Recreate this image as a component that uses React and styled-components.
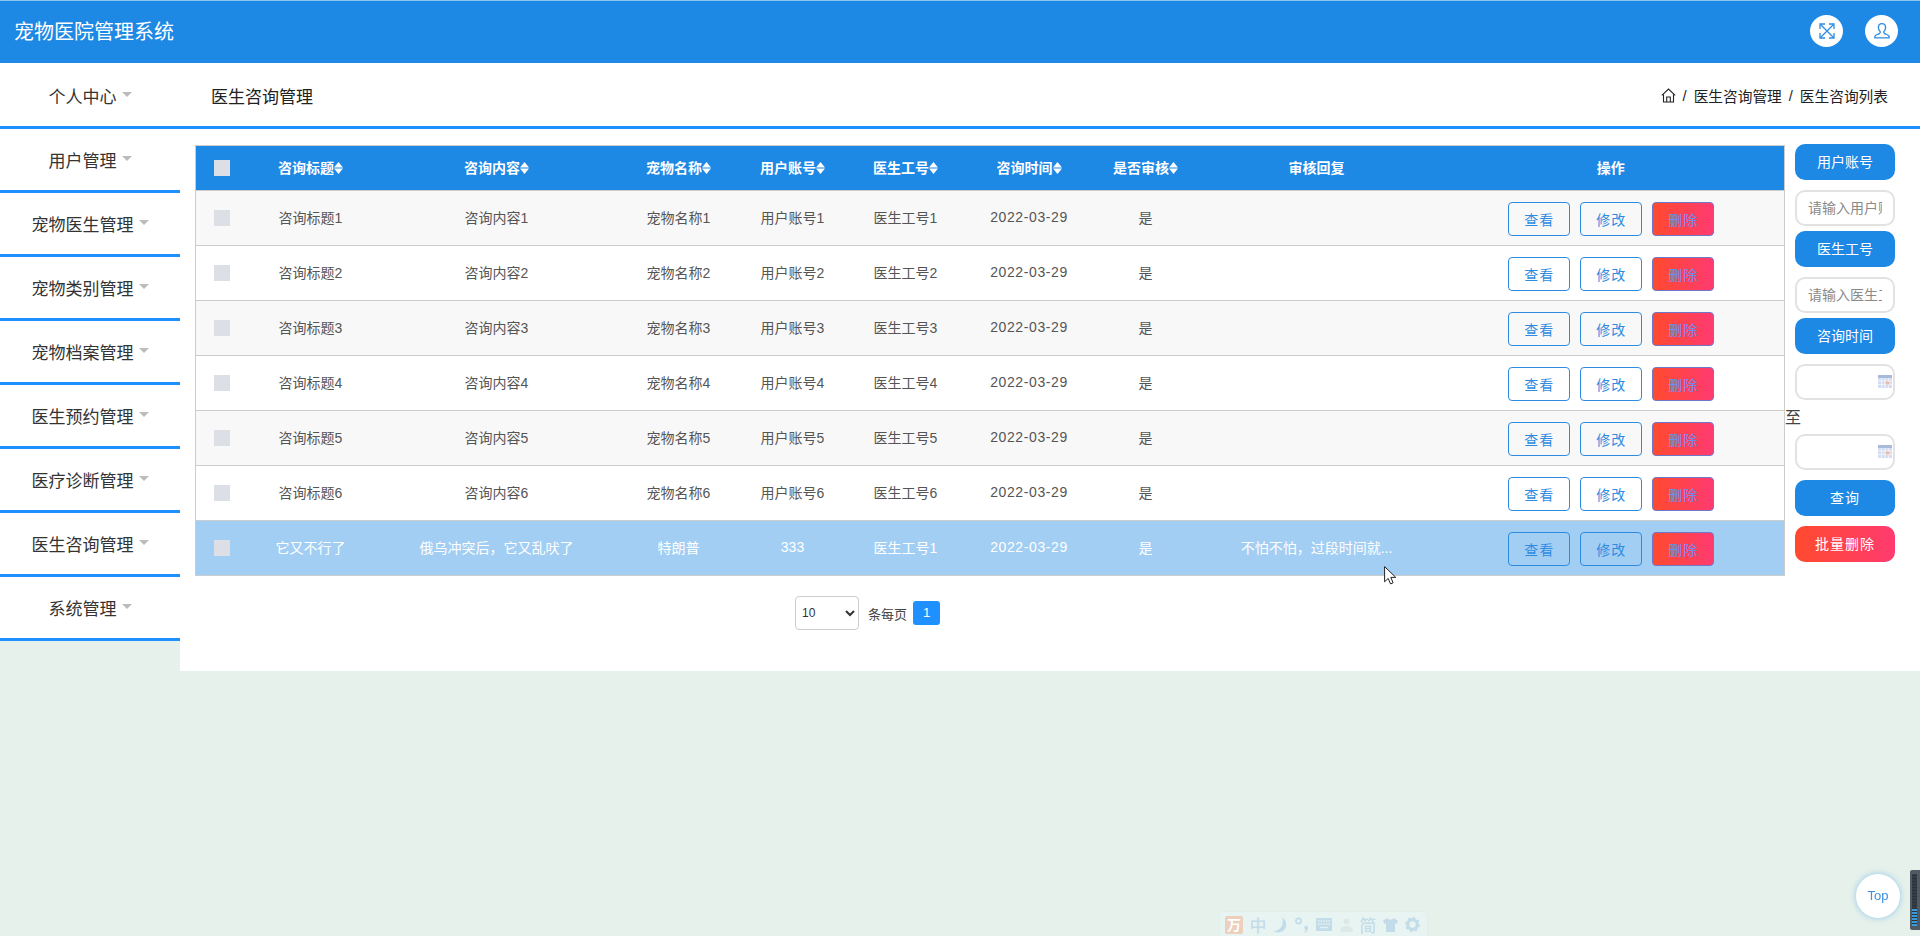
import React from 'react';
import styled, { createGlobalStyle } from 'styled-components';

const menuItems = [
  '个人中心',
  '用户管理',
  '宠物医生管理',
  '宠物类别管理',
  '宠物档案管理',
  '医生预约管理',
  '医疗诊断管理',
  '医生咨询管理',
  '系统管理',
];

const columns = [
  { title: '咨询标题', sort: true },
  { title: '咨询内容', sort: true },
  { title: '宠物名称', sort: true },
  { title: '用户账号', sort: true },
  { title: '医生工号', sort: true },
  { title: '咨询时间', sort: true },
  { title: '是否审核', sort: true },
  { title: '审核回复' },
  { title: '操作' },
];

const columnWidths = [53, 124, 248, 116, 112, 114, 133, 100, 242, 347];
const TIME_COLUMN = 5;

const rows = [1, 2, 3, 4, 5, 6].map(n => [
  `咨询标题${n}`,
  `咨询内容${n}`,
  `宠物名称${n}`,
  `用户账号${n}`,
  `医生工号${n}`,
  '2022-03-29',
  '是',
  '',
]);
rows.push([
  '它又不行了',
  '俄乌冲突后，它又乱吠了',
  '特朗普',
  '333',
  '医生工号1',
  '2022-03-29',
  '是',
  '不怕不怕，过段时间就...',
]);

function App() {
  return (
    <>
      <GlobalStyle />
      <TopBar>
        <AppTitle>宠物医院管理系统</AppTitle>
        <TopActions>
          <RoundIcon>
            <ExpandIcon />
          </RoundIcon>
          <RoundIcon>
            <UserIcon />
          </RoundIcon>
        </TopActions>
      </TopBar>
      <Layout>
        <Sidebar>
          {menuItems.map(item => (
            <MenuItem key={item}>
              {item}
              <Caret />
            </MenuItem>
          ))}
        </Sidebar>
        <Main>
          <PageHeader>
            <PageTitle>医生咨询管理</PageTitle>
            <Breadcrumb>
              <HomeIcon />
              <Slash>/</Slash>
              <span>医生咨询管理</span>
              <Slash>/</Slash>
              <span>医生咨询列表</span>
            </Breadcrumb>
          </PageHeader>
          <Content>
            <TableArea>
              <Table>
                <colgroup>
                  {columnWidths.map((width, i) => (
                    <col key={i} width={width} />
                  ))}
                </colgroup>
                <thead>
                  <tr>
                    <HeadCell>
                      <CheckBox />
                    </HeadCell>
                    {columns.map(col => (
                      <HeadCell key={col.title}>
                        {col.title}
                        {col.sort && <SortIcon />}
                      </HeadCell>
                    ))}
                  </tr>
                </thead>
                <tbody>
                  {rows.map((row, i) => (
                    <Row key={i} $striped={i % 2 === 0} $active={i === rows.length - 1}>
                      <Cell>
                        <CheckBox />
                      </Cell>
                      {row.map((value, j) => (
                        <Cell key={j} $wide={j === TIME_COLUMN}>{value}</Cell>
                      ))}
                      <ActionCell>
                        <RowActions>
                          <OutlineButton>查看</OutlineButton>
                          <OutlineButton>修改</OutlineButton>
                          <DeleteButton>删除</DeleteButton>
                        </RowActions>
                      </ActionCell>
                    </Row>
                  ))}
                </tbody>
              </Table>
              <Pagination>
                <PageSize defaultValue="10">
                  <option value="10">10</option>
                  <option value="20">20</option>
                  <option value="50">50</option>
                </PageSize>
                <PageSizeLabel>条每页</PageSizeLabel>
                <PageNumber>1</PageNumber>
              </Pagination>
            </TableArea>
            <SearchPanel>
              <FieldLabel>用户账号</FieldLabel>
              <TextField placeholder="请输入用户账号" $gap={5} />
              <FieldLabel>医生工号</FieldLabel>
              <TextField placeholder="请输入医生工号" $gap={5} />
              <FieldLabel>咨询时间</FieldLabel>
              <DateField />
              <ToLabel>至</ToLabel>
              <DateField $last />
              <SearchButton>查询</SearchButton>
              <BatchDeleteButton>批量删除</BatchDeleteButton>
            </SearchPanel>
          </Content>
        </Main>
      </Layout>
      <TopButton>Top</TopButton>
      <ScrollWidget />
      <ImeBar>
        <ImeLogo>万</ImeLogo>
        <ImeGlyph>中</ImeGlyph>
        <ImeSlot>
          <svg width="14" height="16" viewBox="0 0 14 16">
            <path d="M9 0C13 3 14.500 8 12 12 9.500 15.500 4 16.500 0 14 4 14 7.500 12 9 8.500 10 5.500 10 3 9 0z" fill="#c3dcea" />
          </svg>
        </ImeSlot>
        <ImeSlot>
          <svg width="14" height="16" viewBox="0 0 14 16">
            <circle cx="3.500" cy="4" r="2.600" fill="none" stroke="#c3dcea" strokeWidth="1.800" />
            <path d="M10 9c2.500 -1 3.500 1 3 3s-2 3 -4 4c1 -1.500 1.500 -2.500 1.300 -3.500C9 12 8.800 9.800 10 9z" fill="#c3dcea" />
          </svg>
        </ImeSlot>
        <ImeSlot>
          <svg width="16" height="13" viewBox="0 0 16 13">
            <rect width="16" height="13" rx="1" fill="#c3dcea" />
            <path d="M2 3h12M2 6h12" stroke="#e6f2f1" strokeWidth="1.400" strokeDasharray="1.600 1" />
            <path d="M4 9.500h8" stroke="#e6f2f1" strokeWidth="1.400" />
          </svg>
        </ImeSlot>
        <ImeSlot>
          <svg width="13" height="14" viewBox="0 0 13 14">
            <circle cx="6.500" cy="3.500" r="3" fill="#dde9e8" />
            <path d="M0 14c0-4 3-6 6.500-6s6.500 2 6.500 6z" fill="#dde9e8" />
          </svg>
        </ImeSlot>
        <ImeGlyph>简</ImeGlyph>
        <ImeSlot>
          <svg width="15" height="14" viewBox="0 0 15 14">
            <path d="M4.500 0L0 2.500 1.500 6l1.500-.700V14h9V5.300L13.500 6 15 2.500 10.500 0c-.5 2-5.500 2-6 0z" fill="#c3dcea" />
          </svg>
        </ImeSlot>
        <ImeSlot>
          <svg width="15" height="15" viewBox="0 0 15 15">
            <circle cx="7.500" cy="7.500" r="4.800" fill="none" stroke="#c3dcea" strokeWidth="3.200" />
            <circle cx="7.500" cy="7.500" r="6.700" fill="none" stroke="#c3dcea" strokeWidth="1.600" strokeDasharray="2.500 2.760" />
          </svg>
        </ImeSlot>
      </ImeBar>
      <MouseCursor viewBox="0 0 12 19">
        <path d="M.6.600v15.200l3.600-3.400 2.300 5.500 2.600-1.100-2.300-5.400h5z" fill="#fff" stroke="#222" strokeWidth="1" />
      </MouseCursor>
    </>
  );
}

function ExpandIcon() {
  return (
    <svg width="16" height="16" viewBox="0 0 16 16" fill="none" stroke="#2e8be0" strokeWidth="1.300">
      <path d="M1.500 1.500l13 13M14.500 1.500l-13 13" />
      <path d="M1 6V1h5M10 1h5v5M1 10v5h5M15 10v5h-5" />
    </svg>
  );
}

function UserIcon() {
  return (
    <svg width="18" height="18" viewBox="0 0 20 20" fill="none" stroke="#2e8be0" strokeWidth="1.500">
      <path d="M10 1.800c-2.500 0-4 1.900-4 4.300 0 1.800.8 3.400 1.900 4.400.3.900.1 1.600-.5 2.100-1.300 1-4.100 1.500-5.100 3.100-.3.600-.3 1.300-.2 2h15.800c.1-.7.100-1.400-.2-2-1-1.600-3.800-2.100-5.100-3.100-.6-.5-.8-1.200-.5-2.100 1.100-1 1.900-2.600 1.900-4.400 0-2.400-1.500-4.300-4-4.300z" />
    </svg>
  );
}

function HomeIcon() {
  return (
    <svg width="15" height="15" viewBox="0 0 15 15" fill="none" stroke="#222" strokeWidth="1.100">
      <path d="M.8 7.300L7.500 1l6.700 6.300" />
      <path d="M2.500 6.200V14h10V6.200" />
      <path d="M5.700 14V9h3.600v5" />
    </svg>
  );
}

function SortIcon() {
  return (
    <SortSvg viewBox="0 0 9 12">
      <path d="M4.500 0L9 5.500H0zM0 6.500h9L4.500 12z" fill="#fff" />
    </SortSvg>
  );
}

function DateField({ $last }) {
  return (
    <DateWrap $last={$last}>
      <TextField as="input" readOnly />
      <CalendarIcon viewBox="0 0 14 13">
        <rect width="14" height="13" fill="#d5def0" />
        <rect width="14" height="3" fill="#a9b9d8" />
        <path d="M0 6h14M0 9.500h14M3.500 3v10M7 3v10M10.500 3v10" stroke="#f3f6fb" strokeWidth=".8" />
        <rect x="8" y="6.500" width="3" height="3" fill="#efb9a5" />
      </CalendarIcon>
    </DateWrap>
  );
}

const GlobalStyle = createGlobalStyle`
  body {
    margin: 0;
    background: #e6f1eb;
    font-family: "Liberation Sans", "Noto Sans CJK SC", sans-serif;
  }
`;

const TopBar = styled.header`
  display: flex;
  align-items: center;
  justify-content: space-between;
  box-sizing: border-box;
  height: 63px;
  padding: 0 22px 0 14px;
  background: #1e88e5;
  border-top: 1px solid #8cc4f2;
`;

const AppTitle = styled.div`
  color: #fff;
  font-size: 20px;
  line-height: 28px;
`;

const TopActions = styled.div`
  display: flex;
  gap: 22px;
  margin-top: -2px;
`;

const RoundIcon = styled.div`
  display: flex;
  align-items: center;
  justify-content: center;
  width: 33px;
  height: 32px;
  border-radius: 50%;
  background: #fff;
`;

const Layout = styled.div`
  display: flex;
  align-items: flex-start;
`;

const Sidebar = styled.nav`
  flex: 0 0 180px;
  box-sizing: border-box;
  padding-top: 2px;
  background: #fff;
`;

const MenuItem = styled.div`
  display: flex;
  align-items: center;
  justify-content: center;
  box-sizing: border-box;
  height: 64px;
  color: #333;
  font-size: 17px;
  border-bottom: 3px solid #1e90ff;
`;

const Caret = styled.span`
  width: 0;
  height: 0;
  margin: -3px 0 0 5px;
  border-left: 5px solid transparent;
  border-right: 5px solid transparent;
  border-top: 5px solid #bbb;
`;

const Main = styled.main`
  flex: 1;
  min-width: 0;
  height: 608px;
  background: #fff;
`;

const PageHeader = styled.div`
  display: flex;
  align-items: center;
  justify-content: space-between;
  box-sizing: border-box;
  height: 66px;
  padding: 2px 32px 0 31px;
  border-bottom: 3px solid #1e90ff;
`;

const PageTitle = styled.div`
  color: #222;
  font-size: 17px;
`;

const Breadcrumb = styled.div`
  display: flex;
  align-items: center;
  color: #222;
  font-size: 14.700px;
`;

const Slash = styled.span`
  margin: 0 7px;
`;

const Content = styled.div`
  display: flex;
  align-items: flex-start;
  padding: 15px 0 0 15px;
`;

const TableArea = styled.div`
  flex: 0 0 1589px;
  padding-top: 1px;
`;

const Table = styled.table`
  width: 1589px;
  table-layout: fixed;
  border-collapse: collapse;
  border: 1px solid #ccc;
  font-size: 14px;
`;

const HeadCell = styled.th`
  box-sizing: border-box;
  height: 45px;
  padding: 0 0 2px;
  background: #1e88e5;
  color: #fff;
  font-size: 14px;
  font-weight: 700;
  text-align: center;
  white-space: nowrap;
  border-bottom: 1px solid #ccc;
`;

const SortSvg = styled.svg`
  width: 9px;
  height: 12px;
  vertical-align: -1px;
`;

const Row = styled.tr`
  background: ${p => (p.$active ? '#a3cef3' : p.$striped ? '#f8f8f8' : '#fff')};
  color: ${p => (p.$active ? '#fff' : '#555')};
`;

const Cell = styled.td`
  box-sizing: border-box;
  height: 55px;
  padding: 0 0 2px;
  text-align: center;
  white-space: nowrap;
  letter-spacing: ${p => (p.$wide ? '0.6px' : 'normal')};
  border-bottom: 1px solid #ccc;
`;

const ActionCell = styled(Cell)`
  padding: 0;
`;

const CheckBox = styled.span`
  display: inline-block;
  width: 16px;
  height: 16px;
  vertical-align: middle;
  background: #dcdfe6;
`;

const RowActions = styled.div`
  display: flex;
  justify-content: center;
  gap: 10px;
  margin-top: 2px;
  padding-left: 1px;
`;

const OutlineButton = styled.button`
  box-sizing: border-box;
  width: 62px;
  height: 34px;
  padding: 0;
  border: 1px solid #2e8be0;
  border-radius: 4px;
  background: transparent;
  color: #2e8be0;
  font-family: inherit;
  font-size: 14px;
  letter-spacing: 1px;
`;

const DeleteButton = styled(OutlineButton)`
  border-color: #6d78c9;
  background: linear-gradient(90deg, #ff4a2e, #ff3a70);
  color: #6c8ef0;
`;

const Pagination = styled.div`
  display: flex;
  align-items: center;
  margin-top: 20px;
  padding-left: 600px;
`;

const PageSize = styled.select`
  box-sizing: border-box;
  width: 64px;
  height: 34px;
  padding: 0 2px;
  border: 1px solid #ccc;
  border-radius: 4px;
  background: #fff;
  color: #333;
  font-family: inherit;
  font-size: 12px;
  font-weight: 400;
`;

const PageSizeLabel = styled.span`
  margin: 0 6px 0 9px;
  color: #444;
  font-size: 13px;
`;

const PageNumber = styled.span`
  width: 27px;
  height: 24px;
  border-radius: 3px;
  background: #1e90ff;
  color: #fff;
  font-size: 13px;
  line-height: 24px;
  text-align: center;
`;

const SearchPanel = styled.aside`
  display: flex;
  flex-direction: column;
  flex: 0 0 110px;
  box-sizing: border-box;
  padding-left: 10px;
`;

const FieldLabel = styled.div`
  box-sizing: border-box;
  width: 100px;
  height: 36px;
  margin-bottom: 10px;
  border-radius: 10px;
  background: #1e88e5;
  color: #fff;
  font-size: 14px;
  line-height: 36px;
  text-align: center;
`;

const TextField = styled.input`
  display: block;
  box-sizing: border-box;
  width: 100px;
  height: 36px;
  margin-bottom: ${p => p.$gap || 0}px;
  padding: 0 11px;
  border: 2px solid #e2e2e2;
  border-radius: 10px;
  background: #fff;
  font-family: inherit;
  font-size: 14px;
  outline: none;

  &::placeholder {
    color: #8a8a8a;
  }
`;

const DateWrap = styled.div`
  position: relative;
  width: 100px;
  height: 36px;
  margin-bottom: ${p => (p.$last ? 10 : 0)}px;
`;

const CalendarIcon = styled.svg`
  position: absolute;
  top: 11px;
  right: 3px;
  width: 14px;
  height: 13px;
`;

const ToLabel = styled.div`
  height: 34px;
  margin-left: -10px;
  color: #444;
  font-size: 16px;
  line-height: 36px;
`;

const SearchButton = styled(FieldLabel)`
  letter-spacing: 1px;
`;

const BatchDeleteButton = styled(SearchButton)`
  margin-bottom: 0;
  background: linear-gradient(90deg, #ff4a2e, #ff3a70);
`;

const TopButton = styled.div`
  position: fixed;
  right: 20px;
  bottom: 18px;
  width: 44px;
  height: 44px;
  border-radius: 50%;
  background: #fff;
  box-shadow: 0 0 6px rgba(64, 158, 230, 0.5);
  color: #3b8fe0;
  font-size: 13px;
  line-height: 44px;
  text-align: center;
`;

const ScrollWidget = styled.div`
  position: fixed;
  right: 0;
  bottom: 6px;
  box-sizing: border-box;
  width: 10px;
  height: 60px;
  padding: 4px 3px 4px 2px;
  border-radius: 2px 0 0 2px;
  background: #4f5a64;

  &::after {
    content: '';
    display: block;
    height: 100%;
    background:
      repeating-linear-gradient(0deg, #3d9ad8 0 2px, #2a3138 2px 3px) bottom / 100% 18px no-repeat,
      repeating-linear-gradient(0deg, #343c45 0 2px, #2a3138 2px 3px);
  }
`;

const ImeBar = styled.div`
  position: fixed;
  left: 1219px;
  bottom: 0;
  display: flex;
  align-items: center;
  box-sizing: border-box;
  width: 209px;
  height: 25px;
  padding: 1px 0 0 5px;
  border: 1px solid #e0eeec;
  border-bottom: 0;
  border-radius: 5px 5px 0 0;
  background: #e8f4f2;
`;

const ImeLogo = styled.div`
  width: 18px;
  height: 18px;
  margin-right: 4px;
  border-radius: 2px;
  background: #eccfbd;
  color: #fff;
  font-size: 14px;
  font-weight: 700;
  line-height: 18px;
  text-align: center;
`;

const ImeSlot = styled.div`
  display: flex;
  align-items: center;
  justify-content: center;
  width: 22px;
  height: 18px;
`;

const ImeGlyph = styled(ImeSlot)`
  color: #c3dcea;
  font-size: 17px;
  font-weight: 500;
`;

const MouseCursor = styled.svg`
  position: fixed;
  left: 1384px;
  top: 566px;
  width: 12px;
  height: 19px;
`;

export default App;
